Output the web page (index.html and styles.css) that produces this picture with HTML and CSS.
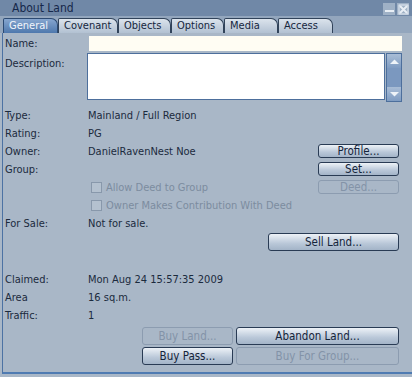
FILE: index.html
```html
<!DOCTYPE html>
<html lang="en">
<head>
    <meta charset="UTF-8">
    <title>About Land</title>
    <link rel="stylesheet" href="styles.css">
</head>
<body>
    <div class="window">
        <div class="titlebar">
            <span class="title">About Land</span>
            <div class="title-btns">
                <span class="tbtn"><svg width="11" height="11" viewBox="0 0 11 11"><rect x="1" y="6" width="9" height="2" fill="#e8eef5"/></svg></span>
                <span class="tbtn"><svg width="11" height="11" viewBox="0 0 11 11"><path d="M2 2L9 9M9 2L2 9" stroke="#e8eef5" stroke-width="2"/><rect x="1" y="1" width="9" height="9" fill="none" stroke="#e8eef5" stroke-width="1"/></svg></span>
            </div>
        </div>

        <div class="tabs">
            <div class="tab active">General</div>
            <div class="tab">Covenant</div>
            <div class="tab">Objects</div>
            <div class="tab">Options</div>
            <div class="tab">Media</div>
            <div class="tab">Access</div>
        </div>

        <div class="panel">
            <div class="row name-row">
                <span class="label">Name:</span>
                <div class="input"></div>
            </div>
            <div class="row desc-row">
                <span class="label">Description:</span>
                <div class="textarea"></div>
                <div class="scrollbar">
                    <span class="sarrow"><svg width="11" height="7" viewBox="0 0 11 7"><path d="M1 6L5.5 1.5L10 6Z" fill="#eef3f8"/></svg></span>
                    <span class="strack"></span>
                    <span class="sarrow"><svg width="11" height="7" viewBox="0 0 11 7"><path d="M1 1L5.5 5.5L10 1Z" fill="#eef3f8"/></svg></span>
                </div>
            </div>

            <div class="row first"><span class="label">Type:</span><span class="value">Mainland / Full Region</span></div>
            <div class="row"><span class="label">Rating:</span><span class="value">PG</span></div>
            <div class="row"><span class="label">Owner:</span><span class="value">DanielRavenNest Noe</span><button class="btn side">Profile...</button></div>
            <div class="row"><span class="label">Group:</span><span class="value"></span><button class="btn side">Set...</button></div>
            <div class="row"><span class="label"></span><span class="value check"><span class="box"></span>Allow Deed to Group</span><button class="btn side" disabled>Deed...</button></div>
            <div class="row"><span class="label"></span><span class="value check"><span class="box"></span>Owner Makes Contribution With Deed</span></div>
            <div class="row"><span class="label">For Sale:</span><span class="value">Not for sale.</span></div>
            <div class="row sell-row"><button class="btn sell">Sell Land...</button></div>

            <div class="row claimed"><span class="label">Claimed:</span><span class="value">Mon Aug 24 15:57:35 2009</span></div>
            <div class="row"><span class="label">Area</span><span class="value">16 sq.m.</span></div>
            <div class="row"><span class="label">Traffic:</span><span class="value">1</span></div>

            <div class="btn-row">
                <button class="btn small" disabled>Buy Land...</button>
                <button class="btn wide">Abandon Land...</button>
            </div>
            <div class="btn-row">
                <button class="btn small">Buy Pass...</button>
                <button class="btn wide" disabled>Buy For Group...</button>
            </div>
        </div>
    </div>
</body>
</html>
```

FILE: styles.css
```css
body {
    margin: 0;
    font-family: "DejaVu Sans", sans-serif;
    font-stretch: condensed;
    font-size: 11px;
    color: #1b2a3d;
    background: #a8b6c6;
}
.window {
    width: 412px;
    height: 377px;
    background: #a9b7c7;
    display: flex;
    flex-direction: column;
    overflow: hidden;
}
.titlebar {
    height: 16px;
    background: #7088a7;
    display: flex;
    align-items: center;
    justify-content: space-between;
    padding: 0 3px 0 12px;
}
.title {
    font-size: 12px;
    color: #15274a;
}
.title-btns {
    display: flex;
    gap: 2px;
    margin-top: 2px;
}
.tbtn {
    width: 12px;
    height: 12px;
    background: #9fb1c6;
    display: flex;
    align-items: center;
    justify-content: center;
}
.tabs {
    height: 17px;
    background: #93a6bd;
    display: flex;
    align-items: flex-end;
    padding-left: 3px;
}
.tab {
    height: 14px;
    line-height: 14px;
    padding: 0 0 0 5px;
    border: 1px solid #31435a;
    border-bottom: none;
    border-radius: 2px 7px 0 0;
    background: linear-gradient(#dbe3ec, #b2c1d2);
    color: #15263d;
    font-size: 11px;
    overflow: hidden;
    white-space: nowrap;
}
.tab:nth-child(1) { width: 48px; }
.tab:nth-child(2) { width: 53px; }
.tab:nth-child(3) { width: 46px; }
.tab:nth-child(4) { width: 46px; }
.tab:nth-child(5) { width: 47px; }
.tab:nth-child(6) { width: 48px; }
.tab.active {
    background: linear-gradient(#86a6cf, #4e78ad);
    color: #f2f6fb;
    border-color: #2c4a72;
}
.panel {
    flex: 1;
    margin-left: 2px;
    border-left: 1px solid #4c72a3;
    border-bottom: 2px solid #4f7bb2;
    padding-left: 2px;
    margin-bottom: 3px;
}
.row {
    display: flex;
    align-items: center;
    height: 18px;
}
.label {
    width: 83px;
    flex-shrink: 0;
}
.value {
    flex: 1;
    white-space: nowrap;
}
.name-row {
    height: 16px;
    margin-top: 2px;
}
.input {
    margin-left: 1px;
    width: 313px;
    height: 15px;
    background: #fffdf3;
}
.desc-row {
    height: 48px;
    margin-top: 2px;
    align-items: flex-start;
}
.desc-row .label {
    margin-top: 4px;
}
.textarea {
    margin-left: -1px;
    width: 296px;
    height: 45px;
    background: #fff;
    border: 1px solid #4d6f9c;
}
.scrollbar {
    width: 14px;
    height: 47px;
    margin-left: 1px;
    background: #7b98bf;
    border: 1px solid #4d6f9c;
    display: flex;
    flex-direction: column;
}
.sarrow {
    height: 14px;
    display: flex;
    align-items: center;
    justify-content: center;
    background: linear-gradient(#a9bdd6, #7f9cc2);
}
.strack {
    flex: 1;
}
.row.first {
    margin-top: 5px;
}
.check {
    display: flex;
    align-items: center;
    color: #7c8c9f;
    margin-left: 3px;
}
.box {
    width: 9px;
    height: 9px;
    border: 1px solid #8898ab;
    background: #b4c1cf;
    margin-right: 4px;
}
.btn {
    font-family: "DejaVu Sans", sans-serif;
    font-stretch: condensed;
    font-size: 11.5px;
    color: #14243a;
    height: 14px;
    padding: 0;
    line-height: 12px;
    border: 1px solid #293b54;
    border-radius: 3px;
    background: linear-gradient(#edf2f7, #b9c7d8 60%, #a3b4c8);
}
.btn:disabled {
    color: #8393a7;
    border-color: #8c9cb0;
    background: #a9b7c7;
}
.btn.side {
    width: 81px;
    margin-right: 13px;
}
.sell-row {
    height: 20px;
    justify-content: flex-end;
}
.btn.sell {
    width: 131px;
    height: 18px;
    margin-right: 13px;
}
.row.claimed {
    margin-top: 18px;
}
.btn-row {
    display: flex;
    gap: 3px;
    padding-left: 137px;
    margin-top: 3px;
}
.btn-row + .btn-row {
    margin-top: 2px;
}
.btn.small {
    width: 91px;
    height: 18px;
}
.btn.wide {
    width: 163px;
    height: 18px;
}
```
